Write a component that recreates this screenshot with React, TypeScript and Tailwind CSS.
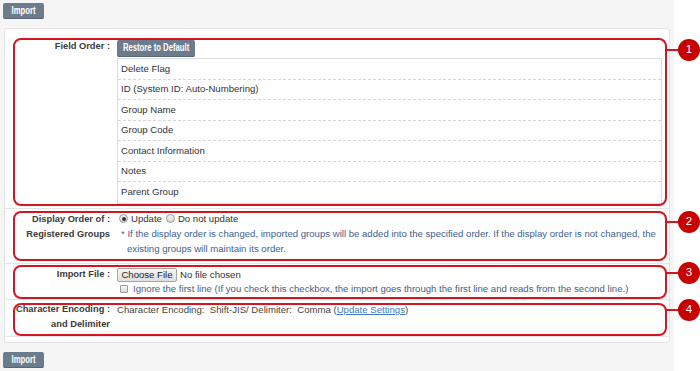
import React from "react";

function SlateButton({ children, className = "" }: { children: React.ReactNode; className?: string }) {
  return (
    <div
      className={`h-[16px] flex items-center justify-center rounded-[2px] bg-[#6d7c8d] border-b border-[#586574] text-white leading-none whitespace-nowrap overflow-hidden ${className}`}
    >
      <span className="inline-block text-[10px] font-bold scale-x-[0.77]">{children}</span>
    </div>
  );
}

function Radio({ checked }: { checked?: boolean }) {
  return (
    <span className="w-[9px] h-[9px] rounded-full border border-[#9a9a9a] bg-gradient-to-b from-[#f4f4f4] to-[#d9d9d9] flex items-center justify-center shrink-0">
      {checked && <span className="w-[4px] h-[4px] rounded-full bg-[#333]" />}
    </span>
  );
}

function Label({ children, pt }: { children: React.ReactNode; pt: string }) {
  return (
    <div className={`w-[108px] shrink-0 text-right pr-[3px] font-bold text-[9.3px] leading-[15px] text-[#3a3a3a] ${pt}`}>
      {children}
    </div>
  );
}

const items = [
  "Delete Flag",
  "ID (System ID: Auto-Numbering)",
  "Group Name",
  "Group Code",
  "Contact Information",
  "Notes",
  "Parent Group",
];

function Box({ top, height }: { top: number; height: number }) {
  return (
    <div
      className="absolute left-[13px] w-[654px] border-2 border-[#d41622] rounded-[8px]"
      style={{ top, height }}
    />
  );
}

function Marker({ y, n }: { y: number; n: number }) {
  return (
    <>
      <div className="absolute left-[666px] w-[14px] h-[2px] bg-[#d41622]" style={{ top: y - 1 }} />
      <div
        className="absolute left-[678px] w-[22px] h-[22px] rounded-full bg-[#c70000] text-white flex items-center justify-center text-[11.5px] leading-none"
        style={{ top: y - 11 }}
      >
        {n}
      </div>
    </>
  );
}

export default function App() {
  return (
    <div
      className="w-[700px] h-[371px] bg-white relative overflow-hidden"
      style={{ fontFamily: '"Liberation Sans", Arial, sans-serif' }}
    >
      <div className="w-[674px] h-full bg-[#f5f5f5] pl-[3px] pt-[3px] flex flex-col">
        <SlateButton className="w-[41px]">Import</SlateButton>

        <div className="mt-[9px] ml-px w-[666px] h-[315px] bg-white border border-[#e3e3e3] rounded-[3px]">
          {/* Row 1 */}
          <div className="flex h-[180px] border-b border-[#e6e6e6]">
            <Label pt="pt-[10px]">Field Order :</Label>
            <div className="pl-[4px] pt-[11px]">
              <SlateButton className="w-[78px] h-[17px]">Restore to Default</SlateButton>
              <div className="mt-px w-[545px] h-[146px] border border-[#dcdcdc] flex flex-col">
                {items.map((it, i) => (
                  <div
                    key={it}
                    className={`h-[20.57px] shrink-0 flex items-center pl-[3px] text-[9.6px] text-[#333] ${
                      i < items.length - 1 ? "border-b border-dashed border-[#d6d6d6]" : ""
                    }`}
                  >
                    {it}
                  </div>
                ))}
              </div>
            </div>
          </div>

          {/* Row 2 */}
          <div className="flex h-[55px] border-b border-[#e6e6e6]">
            <Label pt="pt-[3px]">
              Display Order of :<br />
              Registered Groups
            </Label>
            <div className="pl-[4px] pt-[2px] text-[9.6px] leading-[15px]">
              <div className="flex items-center text-[#333]">
                <span className="ml-[2px]"><Radio checked /></span>
                <span className="ml-[3px]">Update</span>
                <span className="ml-[4px]"><Radio /></span>
                <span className="ml-[3px]">Do not update</span>
              </div>
              <div className="text-[#43608e] whitespace-nowrap pl-[4px]">
                * If the display order is changed, imported groups will be added into the specified order. If the display order is not changed, the
              </div>
              <div className="text-[#43608e] whitespace-nowrap pl-[10px]">existing groups will maintain its order.</div>
            </div>
          </div>

          {/* Row 3 */}
          <div className="flex h-[36px] border-b border-[#e6e6e6]">
            <Label pt="pt-[3px]">Import File :</Label>
            <div className="pl-[4px] pt-[4px] text-[9.6px]">
              <div className="flex items-center h-[14px]">
                <div className="h-[14px] w-[60px] flex items-center justify-center border border-[#a6a6a6] rounded-[2px] bg-gradient-to-b from-[#f6f6f6] to-[#dedede] text-[#222]">
                  Choose File
                </div>
                <span className="ml-[3px] text-[#333]">No file chosen</span>
              </div>
              <div className="flex items-center h-[14px]">
                <span className="ml-[3px] w-[8px] h-[8px] border border-[#9a9a9a] rounded-[1px] bg-gradient-to-b from-[#f6f6f6] to-[#dcdcdc] shrink-0" />
                <span className="ml-[5px] text-[#4b5d7e] whitespace-nowrap">
                  Ignore the first line (If you check this checkbox, the import goes through the first line and reads from the second line.)
                </span>
              </div>
            </div>
          </div>

          {/* Row 4 */}
          <div className="flex h-[37px] border-b border-[#e6e6e6]">
            <Label pt="pt-[2px]">
              Character Encoding :<br />
              and Delimiter
            </Label>
            <div className="pl-[4px] pt-[2px] text-[9.6px] leading-[15px] text-[#444] whitespace-pre">
              {"Character Encoding:  Shift-JIS/ Delimiter:  Comma ("}
              <span className="text-[#3b7ac4] underline">Update Settings</span>
              {")"}
            </div>
          </div>
        </div>

        <SlateButton className="w-[41px] mt-[9px]">Import</SlateButton>
      </div>

      {/* Annotations */}
      <Box top={38} height={168} />
      <Box top={211} height={50} />
      <Box top={265} height={34} />
      <Box top={303} height={33} />
      <Marker y={50} n={1} />
      <Marker y={222} n={2} />
      <Marker y={273} n={3} />
      <Marker y={310} n={4} />
    </div>
  );
}
